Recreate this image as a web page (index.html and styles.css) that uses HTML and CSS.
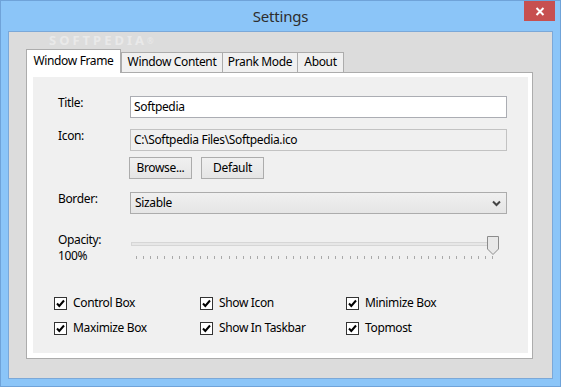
FILE: index.html
```html
<!DOCTYPE html>
<html lang="en">
<head>
    <meta charset="UTF-8">
    <title>Settings</title>
    <link rel="stylesheet" href="styles.css">
</head>
<body>
    <div class="window">
        <div class="titlebar">
            <span class="title">Settings</span>
            <div class="close-btn">
                <svg width="10" height="9" viewBox="0 0 10 9" aria-hidden="true">
                    <path d="M1.5 1 L8.5 8 M8.5 1 L1.5 8" stroke="#ffffff" stroke-width="2"/>
                </svg>
            </div>
        </div>

        <div class="client">
            <div class="watermark">SOFTPEDIA<span class="reg">®</span></div>

            <div class="tab-control">
                <div class="tab-strip">
                    <div class="tab active tab-frame">Window Frame</div>
                    <div class="tab tab-content">Window Content</div>
                    <div class="tab tab-prank">Prank Mode</div>
                    <div class="tab tab-about">About</div>
                </div>

                <div class="tab-page">
                    <div class="page-inner">
                        <div class="form-row row-title">
                            <div class="field-label">Title:</div>
                            <div class="textbox">Softpedia</div>
                        </div>

                        <div class="form-row row-icon">
                            <div class="field-label">Icon:</div>
                            <div class="textbox readonly">C:\Softpedia Files\Softpedia.ico</div>
                        </div>

                        <div class="button-row">
                            <div class="button btn-browse">Browse...</div>
                            <div class="button btn-default">Default</div>
                        </div>

                        <div class="form-row row-border">
                            <div class="field-label">Border:</div>
                            <div class="combo">
                                <span>Sizable</span>
                                <svg class="combo-arrow" width="9" height="7" viewBox="0 0 9 7" aria-hidden="true">
                                    <path d="M1 1.5 L4.5 5 L8 1.5" stroke="#444444" stroke-width="2" fill="none"/>
                                </svg>
                            </div>
                        </div>

                        <div class="form-row row-opacity">
                            <div class="field-label opacity-label">Opacity:<br>100%</div>
                            <div class="slider">
                                <div class="slider-track"></div>
                                <div class="slider-ticks"></div>
                                <svg class="slider-thumb" width="12" height="19" viewBox="0 0 12 19" aria-hidden="true">
                                    <path d="M0.5 0.5 H11.5 V13 L6 18.5 L0.5 13 Z" fill="#e8e8e8" stroke="#8c8c8c"/>
                                </svg>
                            </div>
                        </div>

                        <div class="check-grid">
                            <div class="check-item"><span class="check-box"><svg width="11" height="11" viewBox="0 0 11 11"><path d="M2 5.5 L4.3 8 L9 2.5" stroke="#000" stroke-width="2" fill="none"/></svg></span><span class="check-text">Control Box</span></div>
                            <div class="check-item"><span class="check-box"><svg width="11" height="11" viewBox="0 0 11 11"><path d="M2 5.5 L4.3 8 L9 2.5" stroke="#000" stroke-width="2" fill="none"/></svg></span><span class="check-text">Show Icon</span></div>
                            <div class="check-item"><span class="check-box"><svg width="11" height="11" viewBox="0 0 11 11"><path d="M2 5.5 L4.3 8 L9 2.5" stroke="#000" stroke-width="2" fill="none"/></svg></span><span class="check-text">Minimize Box</span></div>
                            <div class="check-item"><span class="check-box"><svg width="11" height="11" viewBox="0 0 11 11"><path d="M2 5.5 L4.3 8 L9 2.5" stroke="#000" stroke-width="2" fill="none"/></svg></span><span class="check-text">Maximize Box</span></div>
                            <div class="check-item"><span class="check-box"><svg width="11" height="11" viewBox="0 0 11 11"><path d="M2 5.5 L4.3 8 L9 2.5" stroke="#000" stroke-width="2" fill="none"/></svg></span><span class="check-text">Show In Taskbar</span></div>
                            <div class="check-item"><span class="check-box"><svg width="11" height="11" viewBox="0 0 11 11"><path d="M2 5.5 L4.3 8 L9 2.5" stroke="#000" stroke-width="2" fill="none"/></svg></span><span class="check-text">Topmost</span></div>
                        </div>
                    </div>
                </div>
            </div>
        </div>
    </div>
</body>
</html>
```

FILE: styles.css
```css
/* Page + window frame */
body {
    margin: 0;
    font-family: "Noto Sans", "Open Sans", sans-serif;
    font-size: 12px;
    letter-spacing: -0.35px;
    color: #000000;
}

.window {
    width: 561px;
    height: 387px;
    box-sizing: border-box;
    border: 1px solid #6fa3d9;
    background-color: #8bc5f8;
    display: flex;
    flex-direction: column;
}

.titlebar {
    position: relative;
    height: 30px;
    text-align: center;
}
.title {
    font-size: 15px;
    letter-spacing: -0.2px;
    line-height: 30px;
    color: #2e2e2e;
}
.close-btn {
    position: absolute;
    top: 0;
    right: 5px;
    width: 31px;
    height: 20px;
    background-color: #c75050;
    display: flex;
    align-items: center;
    justify-content: center;
}

.client {
    position: relative;
    margin: 0 7px 7px 7px;
    height: 348px;
    box-sizing: border-box;
    border: 1px solid #7ba8d8;
    background-color: #dcdcdc;
}

/* faint screenshot watermark, kept in the strip above the tabs */
.watermark {
    position: absolute;
    left: 40px;
    top: 1px;
    font-size: 13px;
    line-height: 15px;
    font-weight: bold;
    letter-spacing: 3px;
    color: rgba(255, 255, 255, 0.4);
    pointer-events: none;
}
.watermark .reg {
    font-size: 8px;
    vertical-align: top;
    font-weight: normal;
    letter-spacing: 0;
}

/* Tabs */
.tab-control {
    margin: 17px 0 0 17px;
    width: 507px;
}
.tab-strip {
    display: flex;
    align-items: flex-end;
    height: 23px;
}
.tab {
    box-sizing: border-box;
    height: 20px;
    border: 1px solid #acacac;
    border-bottom: none;
    background-color: #f0f0f0;
    text-align: center;
    line-height: 16px;
    padding-top: 1px;
    white-space: nowrap;
}
.tab.active {
    position: relative;
    z-index: 2;
    height: 24px;
    margin-bottom: -1px;
    background-color: #ffffff;
    padding-top: 3px;
}
.tab-frame { width: 95px; }
.tab-content { width: 102px; }
.tab-prank { width: 76px; margin-left: -1px; }
.tab-about { width: 47px; margin-left: -1px; }

.tab-page {
    box-sizing: border-box;
    height: 287px;
    border: 1px solid #acacac;
    background-color: #ffffff;
    padding: 4px 4px 5px 6px;
}
.page-inner {
    height: 100%;
    background-color: #f0f0f0;
    padding: 19px 0 0 25px;
    box-sizing: border-box;
}

/* Form rows */
.form-row {
    display: flex;
    align-items: flex-start;
}
.field-label {
    width: 72px;
    line-height: 16px;
    margin-top: -1px;
}
.row-icon { margin-top: 11px; }
.row-border { margin-top: 13px; }
.row-opacity { margin-top: 19px; }

.textbox {
    box-sizing: border-box;
    width: 377px;
    height: 22px;
    border: 1px solid #abadb3;
    background-color: #ffffff;
    padding: 0 3px;
    line-height: 20px;
}
.textbox.readonly {
    background-color: #f0f0f0;
    border-color: #c2c2c2;
}

.button-row {
    display: flex;
    gap: 9px;
    margin: 6px 0 0 71px;
}
.button {
    box-sizing: border-box;
    width: 63px;
    height: 22px;
    border: 1px solid #acacac;
    background: linear-gradient(to bottom, #f0f0f0, #e5e5e5);
    text-align: center;
    line-height: 20px;
}

.combo {
    box-sizing: border-box;
    width: 377px;
    height: 22px;
    border: 1px solid #acacac;
    background: linear-gradient(to bottom, #f0f0f0, #e5e5e5);
    padding: 0 4px;
    line-height: 20px;
    display: flex;
    justify-content: space-between;
    align-items: center;
}
.combo-arrow {
    margin-right: 1px;
}

/* Opacity slider */
.opacity-label {
    width: 60px;
    margin-right: 12px;
    line-height: 16px;
}
.slider {
    position: relative;
    width: 377px;
    height: 28px;
    margin-top: 3px;
}
.slider-track {
    margin: 6px 0 0 1px;
    width: 366px;
    height: 4px;
    box-sizing: border-box;
    border: 1px solid #d6d6d6;
    background-color: #e7e7e7;
}
.slider-ticks {
    margin: 10px 0 0 6px;
    width: 357px;
    height: 3px;
    background: repeating-linear-gradient(to right, #a9a9a9 0 1px, transparent 1px 7.12px);
}
.slider-thumb {
    position: absolute;
    left: 357px;
    top: 0;
}

/* Checkboxes */
.check-grid {
    display: grid;
    grid-template-columns: 146px 146px 146px;
    row-gap: 12px;
    margin: 33px 0 0 -4px;
}
.check-item {
    display: flex;
    align-items: flex-start;
    height: 13px;
}
.check-box {
    box-sizing: border-box;
    width: 13px;
    height: 13px;
    border: 1px solid #333333;
    background-color: #ffffff;
    display: flex;
    align-items: center;
    justify-content: center;
}
.check-text {
    margin: -2px 0 0 6px;
    line-height: 16px;
    white-space: nowrap;
}
```
